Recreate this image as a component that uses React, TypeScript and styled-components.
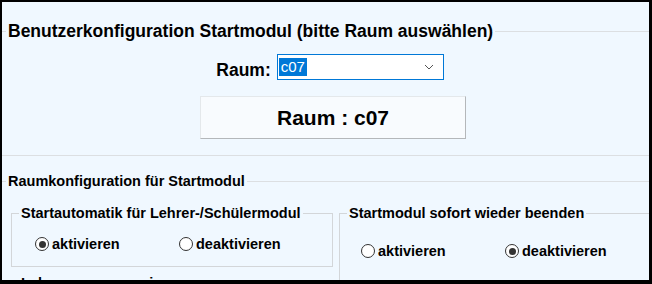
import React from 'react';
import styled, { createGlobalStyle } from 'styled-components';

const GlobalStyle = createGlobalStyle`
    body {
        margin: 0;
        font-family: "Liberation Sans", Arial, sans-serif;
        color: #000;
    }
`;

const Frame = styled('div')`
    width: 652px;
    height: 284px;
    box-sizing: border-box;
    border-style: solid;
    border-color: #000;
    border-width: 2px 3px 4px 2px;
    background: #f0f8ff;
    overflow: hidden;
`;

const Canvas = styled('div')`
    width: 662px;
`;

const Section = styled('fieldset')<{ $top: number }>`
    margin: ${(p) => p.$top}px 0 0;
    padding: 0;
    min-width: 0;
    border: none;
    border-top: 1px solid #dcdfe2;
    border-bottom: 1px solid #dcdfe2;
`;

const SectionLegend = styled('legend')<{ $size: number; $line: number }>`
    margin-left: 4px;
    padding: 0 2px;
    font-size: ${(p) => p.$size}px;
    line-height: ${(p) => p.$line}px;
    font-weight: bold;
`;

const RoomArea = styled('div')`
    display: flex;
    flex-direction: column;
    align-items: center;
    padding: 13px 0 16px;
`;

const RoomRow = styled('div')`
    display: flex;
    align-items: flex-end;
    gap: 6px;
    margin-left: -6px;
`;

const RoomLabel = styled('label')`
    font-size: 17.5px;
    line-height: 20px;
    font-weight: bold;
`;

const SelectBox = styled('div')`
    width: 167px;
    height: 26px;
    box-sizing: border-box;
    border: 1px solid #0078d7;
    background: #fff;
    display: flex;
    align-items: center;
    justify-content: space-between;
    padding: 0 9px 0 1px;
`;

const SelectedText = styled('span')`
    background: #0078d7;
    color: #fff;
    font-size: 15px;
    line-height: 18px;
    padding: 0 2px;
`;

const RoomButton = styled('button')`
    margin-top: 16px;
    width: 266px;
    height: 43px;
    background: #f8fbfe;
    border: 1px solid;
    border-color: #e4e8eb #b4b7ba #b4b7ba #e4e8eb;
    font-family: "Liberation Sans", Arial, sans-serif;
    font-size: 21px;
    font-weight: bold;
    color: #000;
    padding: 0;
`;

const Columns = styled('div')`
    display: grid;
    grid-template-columns: 322px 322px;
    column-gap: 6px;
    padding: 15px 0 0 9px;
    align-items: start;
`;

const Stack = styled('div')`
    display: flex;
    flex-direction: column;
    gap: 8px;
`;

const Group = styled('fieldset')<{ $tall?: boolean }>`
    margin: 0;
    padding: 0;
    min-width: 0;
    box-sizing: border-box;
    border: 1px solid #d3d6d9;
    height: ${(p) => (p.$tall ? '200px' : 'auto')};
`;

const GroupLegend = styled('legend')`
    margin-left: 7px;
    padding: 0 2px;
    font-size: 14.5px;
    line-height: 17px;
    font-weight: bold;
`;

const RadioRow = styled('div')<{ $top: number; $indent: number }>`
    display: grid;
    grid-template-columns: 144px auto;
    padding: ${(p) => p.$top}px 0 12px ${(p) => p.$indent}px;
`;

const RadioItem = styled('label')`
    display: inline-flex;
    align-items: center;
    gap: 3px;
    font-size: 14.5px;
    line-height: 20px;
    font-weight: bold;
`;

const RadioCircle = styled('span')<{ $checked: boolean }>`
    width: 14px;
    height: 14px;
    box-sizing: border-box;
    border: 1px solid #333;
    border-radius: 50%;
    background: #fff;
    display: flex;
    align-items: center;
    justify-content: center;

    &::after {
        content: '';
        width: 7px;
        height: 7px;
        border-radius: 50%;
        background: ${(p) => (p.$checked ? '#333' : 'transparent')};
    }
`;

const Chevron = () => (
    <svg width="10" height="6" viewBox="0 0 10 6">
        <path d="M1 1 L5 5 L9 1" fill="none" stroke="#555" strokeWidth="1" />
    </svg>
);

interface RadioPairProps {
    active: boolean;
    top: number;
    indent: number;
}

const RadioPair: React.FC<RadioPairProps> = ({ active, top, indent }) => (
    <RadioRow $top={top} $indent={indent}>
        <RadioItem>
            <RadioCircle $checked={active} />
            aktivieren
        </RadioItem>
        <RadioItem>
            <RadioCircle $checked={!active} />
            deaktivieren
        </RadioItem>
    </RadioRow>
);

export default function App() {
    return (
        <>
            <GlobalStyle />
            <Frame>
                <Canvas>
                    <Section $top={19}>
                        <SectionLegend $size={17.5} $line={20}>
                            Benutzerkonfiguration Startmodul (bitte Raum auswählen)
                        </SectionLegend>
                        <RoomArea>
                            <RoomRow>
                                <RoomLabel>Raum:</RoomLabel>
                                <SelectBox>
                                    <SelectedText>c07</SelectedText>
                                    <Chevron />
                                </SelectBox>
                            </RoomRow>
                            <RoomButton>Raum : c07</RoomButton>
                        </RoomArea>
                    </Section>
                    <Section $top={17}>
                        <SectionLegend $size={14.5} $line={17}>
                            Raumkonfiguration für Startmodul
                        </SectionLegend>
                        <Columns>
                            <Stack>
                                <Group>
                                    <GroupLegend>Startautomatik für Lehrer-/Schülermodul</GroupLegend>
                                    <RadioPair active top={12} indent={23} />
                                </Group>
                                <Group>
                                    <GroupLegend>Lehrernamen anzeigen</GroupLegend>
                                    <RadioPair active top={12} indent={23} />
                                </Group>
                            </Stack>
                            <Group $tall>
                                <GroupLegend>Startmodul sofort wieder beenden</GroupLegend>
                                <RadioPair active={false} top={19} indent={21} />
                            </Group>
                        </Columns>
                    </Section>
                </Canvas>
            </Frame>
        </>
    );
}
